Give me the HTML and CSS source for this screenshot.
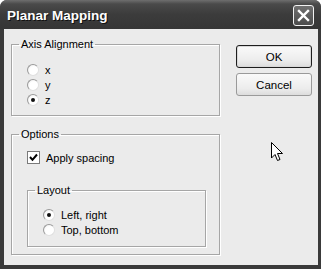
FILE: index.html
```html
<!DOCTYPE html>
<html lang="en">
<head>
  <meta charset="UTF-8" />
  <title>Planar Mapping</title>
  <link rel="stylesheet" href="styles.css">
</head>
<body>
  <div class="janela">
    <div class="titulo">
      <span class="titulo-texto">Planar Mapping</span>
      <span class="fechar">
        <svg width="13" height="13" viewBox="0 0 13 13">
          <path d="M2 2 L11 11 M11 2 L2 11" stroke="#fff" stroke-width="2.4" stroke-linecap="square"/>
        </svg>
      </span>
    </div>

    <div class="conteudo">
      <div class="coluna">
        <fieldset class="grupo eixo">
          <legend>Axis Alignment</legend>
          <label class="opcao"><span class="radio"></span>x</label>
          <label class="opcao"><span class="radio"></span>y</label>
          <label class="opcao"><span class="radio marcado"></span>z</label>
        </fieldset>

        <fieldset class="grupo opcoes">
          <legend>Options</legend>
          <label class="opcao"><span class="caixa">
            <svg width="9" height="9" viewBox="0 0 9 9">
              <path d="M1 4 L3.5 6.8 L8 1.5" stroke="#000" stroke-width="2" fill="none"/>
            </svg>
          </span>Apply spacing</label>

          <fieldset class="grupo layout">
            <legend>Layout</legend>
            <label class="opcao"><span class="radio marcado"></span>Left, right</label>
            <label class="opcao"><span class="radio"></span>Top, bottom</label>
          </fieldset>
        </fieldset>
      </div>

      <div class="botoes">
        <button class="botao padrao">OK</button>
        <button class="botao">Cancel</button>
      </div>
    </div>

    <!-- ponteiro do mouse -->
    <svg class="cursor" width="13" height="20" viewBox="0 0 13 20">
      <path d="M0.5 0.5 L0.5 16 L4 12.5 L6.5 18.5 L9 17.5 L6.5 11.5 L11.5 11.5 Z" fill="#fff" stroke="#000" stroke-width="1"/>
    </svg>
  </div>
</body>
</html>
```

FILE: styles.css
```css
body {
  margin: 0;
  background: #fff;
  font-family: "Liberation Sans", Arial, sans-serif;
  font-size: 11px;
  color: #000;
}

.janela {
  position: relative;
  width: 321px;
  height: 269px;
  box-sizing: border-box;
  background: #3a3a3a;
  border-radius: 7px 7px 0 0;
  padding: 0 3px 4px 4px;
  display: flex;
  flex-direction: column;
}

.titulo {
  height: 29px;
  display: flex;
  align-items: center;
  justify-content: space-between;
  padding: 0 4px 0 3px;
  background: linear-gradient(to bottom, #6e6e6e 0px, #4a4a4a 4px, #3c3c3c 14px, #353535 29px);
  margin: 0 -3px 0 -4px;
  padding-left: 7px;
  padding-right: 7px;
  border-radius: 7px 7px 0 0;
}

.titulo-texto {
  color: #fff;
  font-weight: bold;
  font-size: 13.5px;
  text-shadow: 1px 1px 0 #111;
  margin-top: 1px;
}

.fechar {
  width: 19px;
  height: 19px;
  border: 1px solid #f2f2f2;
  border-radius: 3px;
  background: linear-gradient(to bottom, #707070, #4c4c4c);
  display: flex;
  align-items: center;
  justify-content: center;
  margin-top: 1px;
}

.conteudo {
  flex: 1;
  background: #ebebeb;
  display: flex;
  padding: 0 0 0 7px;
}

.coluna {
  width: 209px;
  display: flex;
  flex-direction: column;
}

.grupo {
  margin: 0;
  border: 1px solid #a6a6a6;
  box-shadow: inset 1px 1px 0 #fff, 1px 1px 0 #fff;
  padding: 0 0 0 15px;
  min-width: 0;
}

.grupo legend {
  padding: 0 2px;
  margin-left: -8px;
  line-height: 13px;
}

.eixo {
  margin-top: 9px;
  padding-top: 11px;
  padding-bottom: 8px;
  height: 78px;
  box-sizing: border-box;
}

.opcoes {
  margin-top: 12px;
  padding-top: 9px;
  padding-right: 13px;
  padding-bottom: 7px;
}

.layout {
  margin-top: 19px;
  padding-top: 10px;
  padding-bottom: 9px;
}

.opcao {
  display: flex;
  align-items: center;
  height: 15px;
  gap: 6px;
}

.radio {
  width: 10px;
  height: 10px;
  border-radius: 50%;
  border: 1px solid #9a9a9a;
  border-right-color: #e0e0e0;
  border-bottom-color: #e0e0e0;
  background: radial-gradient(circle at 60% 60%, #fff 50%, #e4e4e4 100%);
  display: flex;
  align-items: center;
  justify-content: center;
}

.radio.marcado::after {
  content: "";
  width: 4px;
  height: 4px;
  border-radius: 50%;
  background: #111;
}

.caixa {
  width: 11px;
  height: 11px;
  border: 1px solid #7a7a7a;
  background: #fff;
  display: flex;
  align-items: center;
  justify-content: center;
}

.botoes {
  margin-left: 16px;
  padding-top: 16px;
  display: flex;
  flex-direction: column;
  gap: 5px;
}

.botao {
  width: 76px;
  height: 23px;
  font-family: "Liberation Sans", Arial, sans-serif;
  font-size: 11.5px;
  background: linear-gradient(to bottom, #fafafa, #ececec 70%, #dcdcdc);
  border: 1px solid #9a9a9a;
  border-radius: 3px;
  padding: 0;
  color: #000;
}

.botao.padrao {
  border: 1px solid #1e1e1e;
  box-shadow: inset 0 0 0 1px #d8d8d8;
}

.cursor {
  position: absolute;
  left: 271px;
  top: 142px;
}
```
